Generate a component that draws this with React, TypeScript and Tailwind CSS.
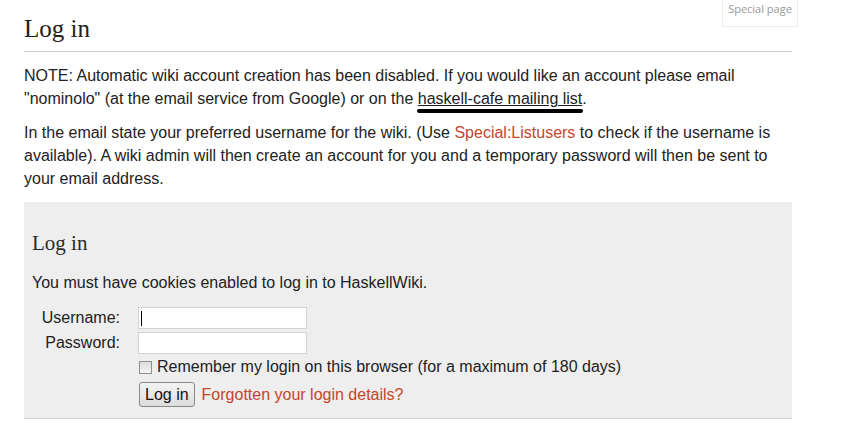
export default function App() {
  const serif = { fontFamily: '"Liberation Serif", "DejaVu Serif", serif' }

  return (
    <div className="relative min-h-[427px] w-[847px] bg-white font-['Liberation_Sans',Arial,sans-serif] text-[#222]">
      {/* page tab */}
      <div className="absolute left-[722px] top-0 h-[27px] w-[76px] border-x border-b border-[#eaeaea] pt-[1px] text-center font-['Open_Sans',sans-serif] text-[11px] leading-[16px] text-[#999]">
        Special page
      </div>

      <div className="pl-[24px] pt-[14px]" style={{ width: 792 }}>
        <h1 className="border-b border-[#c8ccd1] pb-[7px] text-[25px] leading-[30px] text-[#222]" style={serif}>
          Log in
        </h1>

        <p className="mt-[12px] text-[16px] leading-[23px]">
          NOTE: Automatic wiki account creation has been disabled. If you would like an account please email
          &quot;nominolo&quot; (at the email service from Google) or on the{' '}
          <a href="#" className="relative underline decoration-1 underline-offset-1">
            haskell-cafe mailing list
            <span className="absolute left-[-1px] right-[-1px] top-[19px] h-[4px] rounded-full bg-black" />
          </a>
          .
        </p>

        <p className="mt-[11px] text-[16px] leading-[23px]">
          In the email state your preferred username for the wiki. (Use{' '}
          <a href="#" className="text-[#c6452b]">
            Special:Listusers
          </a>{' '}
          to check if the username is available). A wiki admin will then create an account for you and a
          temporary password will then be sent to your email address.
        </p>

        <div className="mt-[12px] border-b border-[#d0d0d0] bg-[#eeeeee] px-[8px] pb-[11px] pt-[28px]">
          <h2 className="text-[21px] leading-[26px] text-[#2a2a2a]" style={serif}>
            Log in
          </h2>
          <p className="mt-[17px] text-[16px] leading-[20px]">You must have cookies enabled to log in to HaskellWiki.</p>

          <div className="mt-[14px] grid grid-cols-[88px_auto] items-center gap-x-[18px] gap-y-[3px] text-[16px] leading-[20px]">
            <label className="text-right">Username:</label>
            <div className="relative h-[22px] w-[169px] border border-[#d4d4d4] bg-white">
              <input type="text" className="h-full w-full bg-transparent px-[2px] outline-none" />
              <span className="absolute left-[2px] top-[3px] h-[15px] w-[1px] bg-black" />
            </div>
            <label className="text-right">Password:</label>
            <input
              type="password"
              className="h-[22px] w-[169px] border border-[#d4d4d4] bg-white px-[2px] outline-none"
            />
            <div />
            <label className="flex items-center gap-[5px]">
              <span className="ml-[1px] h-[13px] w-[13px] border border-[#8f8f8f] bg-gradient-to-b from-[#dcdcdc] to-[#f4f4f4]" />
              Remember my login on this browser (for a maximum of 180 days)
            </label>
            <div />
            <div className="mt-[2px] flex items-center gap-[7px]">
              <button className="ml-[1px] h-[25px] rounded-[3px] border border-[#8a8a8a] bg-gradient-to-b from-[#f4f4f4] to-[#dcdcdc] px-[5px] text-[16px] leading-[20px] text-[#111]">
                Log in
              </button>
              <a href="#" className="text-[#c6452b]">
                Forgotten your login details?
              </a>
            </div>
          </div>
        </div>
      </div>
    </div>
  )
}
